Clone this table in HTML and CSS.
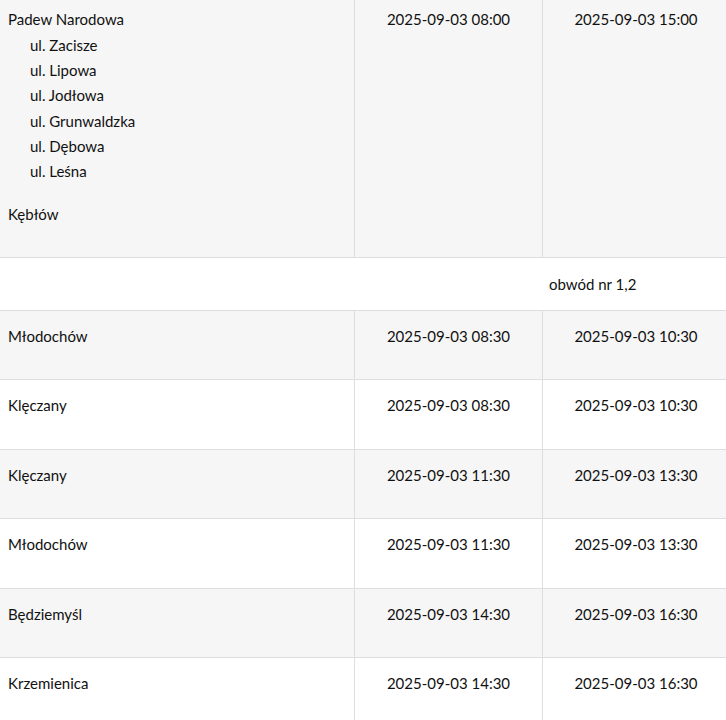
FILE: index.html
```html
<!DOCTYPE html>
<html lang="pl">
<head>
<meta charset="utf-8">
<title>Harmonogram</title>
<link rel="stylesheet" href="styles.css">
</head>
<body>
<div class="viewport">
  <div class="table">
    <div class="row row-first shade">
      <div class="cell name">
        <div class="line">Padew Narodowa</div>
        <ul class="streets">
          <li>ul. Zacisze</li>
          <li>ul. Lipowa</li>
          <li>ul. Jodłowa</li>
          <li>ul. Grunwaldzka</li>
          <li>ul. Dębowa</li>
          <li>ul. Leśna</li>
        </ul>
        <div class="line extra">Kębłów</div>
      </div>
      <div class="cell date">2025-09-03 08:00</div>
      <div class="cell date last">2025-09-03 15:00</div>
    </div>

    <div class="row row-group">
      <div class="gcell"></div>
      <div class="gcell"></div>
      <div class="gcell group-label">obwód nr 1,2</div>
    </div>

    <div class="row row-data shade">
      <div class="cell name">Młodochów</div>
      <div class="cell date">2025-09-03 08:30</div>
      <div class="cell date last">2025-09-03 10:30</div>
    </div>
    <div class="row row-data">
      <div class="cell name">Klęczany</div>
      <div class="cell date">2025-09-03 08:30</div>
      <div class="cell date last">2025-09-03 10:30</div>
    </div>
    <div class="row row-data shade">
      <div class="cell name">Klęczany</div>
      <div class="cell date">2025-09-03 11:30</div>
      <div class="cell date last">2025-09-03 13:30</div>
    </div>
    <div class="row row-data">
      <div class="cell name">Młodochów</div>
      <div class="cell date">2025-09-03 11:30</div>
      <div class="cell date last">2025-09-03 13:30</div>
    </div>
    <div class="row row-data shade">
      <div class="cell name">Będziemyśl</div>
      <div class="cell date">2025-09-03 14:30</div>
      <div class="cell date last">2025-09-03 16:30</div>
    </div>
    <div class="row row-data">
      <div class="cell name">Krzemienica</div>
      <div class="cell date">2025-09-03 14:30</div>
      <div class="cell date last">2025-09-03 16:30</div>
    </div>
  </div>
</div>
</body>
</html>
```
FILE: styles.css
```css
html, body {
  margin: 0;
  padding: 0;
  background: #ffffff;
  overflow: hidden;
}

.viewport {
  width: 726px;
  height: 720px;
  overflow: hidden;
}

.table {
  width: 729px;
  font-family: "Lato", "Open Sans", sans-serif;
  font-size: 15px;
  color: #111111;
}

.row {
  display: grid;
  grid-template-columns: 355px 188px 186px;
  border-bottom: 1px solid #dedede;
  background: #ffffff;
}

.row.shade {
  background: #f6f6f6;
}

.cell {
  box-sizing: border-box;
  border-right: 1px solid #dedede;
}

.cell.last {
  border-right: none;
}

.cell.name {
  padding-left: 8px;
}

.cell.date {
  text-align: center;
}

/* first (tall) row */
.row-first .cell {
  padding-top: 7.33px;
  line-height: 25.33px;
}

.row-first .cell.name {
  padding-bottom: 29.33px;
}

.streets {
  list-style: none;
  margin: 0;
  padding: 0 0 0 22px;
}

.line.extra {
  margin-top: 17.67px;
}

/* group label row */
.row-group .gcell {
  padding: 16px 0;
  line-height: 20px;
}

.group-label {
  padding-left: 6px !important;
}

/* data rows */
.row-data .cell {
  padding-top: 15px;
  padding-bottom: 33.5px;
  line-height: 20px;
}
```
